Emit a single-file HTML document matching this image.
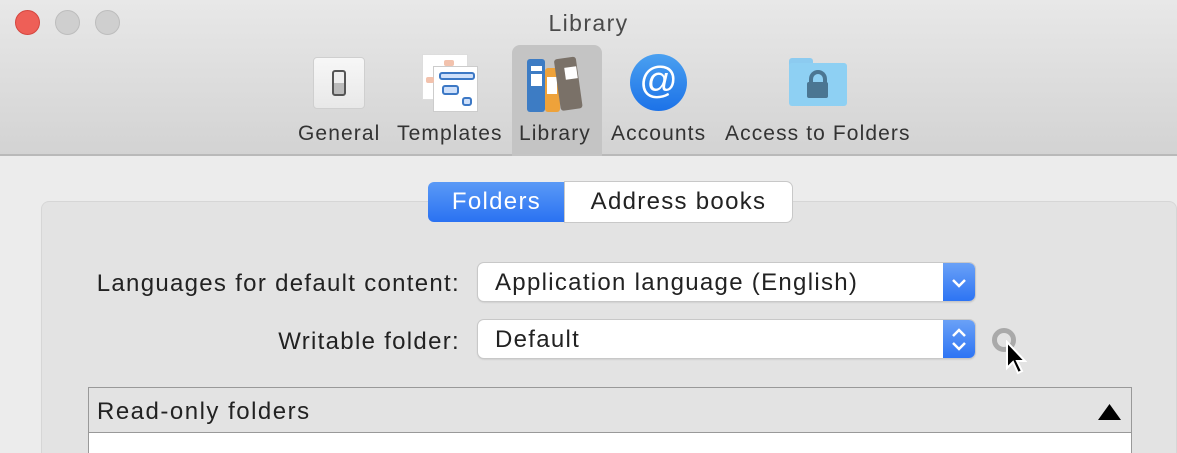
<!DOCTYPE html>
<html><head><style>
*{margin:0;padding:0;box-sizing:border-box}
html,body{width:1177px;height:453px;overflow:hidden}
body{background:#ececec;font-family:"Liberation Sans",sans-serif;position:relative}
.bar{position:absolute;left:0;top:0;width:1177px;height:156px;background:linear-gradient(#e8e8e8,#d3d3d3);border-bottom:2px solid #b9b9b9}
.tl{position:absolute;top:10px;width:25px;height:25px;border-radius:50%}
.title{position:absolute;top:10px;left:0;width:1177px;text-align:center;font-size:23px;letter-spacing:1.4px;color:#4a4a4a}
.lab{position:absolute;top:122px;font-size:21px;letter-spacing:1.1px;color:#333}
.abs{position:absolute}
.group{position:absolute;left:41px;top:201px;width:1136px;height:252px;background:#e3e3e3;border:1px solid #d6d6d6;border-bottom:none;border-radius:8px 8px 0 0}
.seg{position:absolute;top:182px;height:40px;font-size:24px;letter-spacing:1.3px;line-height:40px;text-align:center}
.lbl{position:absolute;font-size:24px;letter-spacing:1.3px;color:#222;text-align:right}
.pop{position:absolute;left:478px;width:497px;height:38px;background:#fff;border-radius:6px;box-shadow:0 0 0 1px #c8c8c8,0 1px 2px rgba(0,0,0,.2);font-size:24px;letter-spacing:1.3px;line-height:40px;padding-left:17px;color:#222}
.pop .btn{position:absolute;right:0;top:0;width:32px;height:38px;border-radius:0 6px 6px 0;background:linear-gradient(#6aa1f6,#2d74f4)}
</style></head><body>
<div class="bar"></div>
<div class="tl" style="left:15px;background:#ee5f57;border:1px solid #d5463f"></div>
<div class="tl" style="left:55px;background:#cfcfcf;border:1px solid #bdbdbd"></div>
<div class="tl" style="left:95px;background:#cfcfcf;border:1px solid #bdbdbd"></div>
<div class="title">Library</div>
<div class="abs" style="left:512px;top:45px;width:90px;height:111px;background:#c4c4c4;border-radius:8px 8px 0 0"></div>
<div class="abs" style="left:313px;top:57px;width:52px;height:52px;background:linear-gradient(#f7f7f7,#e8e8e8);border:1px solid #cfcfcf;border-radius:4px"></div>
<div class="abs" style="left:332px;top:70px;width:14px;height:26px;border:2px solid #555;border-radius:3px;background:linear-gradient(#eee 50%,#bbb 50%)"></div>
<div class="abs" style="left:422px;top:54px;width:46px;height:46px;background:#fff;border:1px solid #ddd"></div>
<div class="abs" style="left:433px;top:66px;width:45px;height:46px;background:#fff;border:1px solid #ccc"></div>
<div class="abs" style="left:439px;top:72px;width:36px;height:8px;background:#cfe0fa;border:2px solid #3c78c5;border-radius:3px"></div>
<div class="abs" style="left:442px;top:85px;width:17px;height:10px;background:#cfe0fa;border:2px solid #3c78c5;border-radius:3px"></div>
<div class="abs" style="left:462px;top:97px;width:10px;height:9px;background:#cfe0fa;border:2px solid #3c78c5;border-radius:3px"></div>
<div class="abs" style="left:444px;top:60px;width:10px;height:6px;background:#f2c2ad;border-radius:2px"></div>
<div class="abs" style="left:426px;top:77px;width:8px;height:6px;background:#f2c2ad;border-radius:2px"></div>
<div class="abs" style="left:527px;top:59px;width:18px;height:53px;background:#3d7cc4;border-radius:3px"></div>
<div class="abs" style="left:531px;top:66px;width:11px;height:5px;background:#fff"></div>
<div class="abs" style="left:531px;top:74px;width:11px;height:12px;background:#fff"></div>
<div class="abs" style="left:545px;top:68px;width:15px;height:44px;background:#eea23a;border-radius:3px"></div>
<div class="abs" style="left:547px;top:77px;width:10px;height:17px;background:#fff"></div>
<div class="abs" style="left:561px;top:59px;width:22px;height:52px;background:#7a7168;border-radius:3px;transform:rotate(-8deg);transform-origin:bottom left"></div>
<div class="abs" style="left:565px;top:67px;width:12px;height:12px;background:#fff;transform:rotate(-8deg)"></div>
<div class="abs" style="left:630px;top:54px;width:57px;height:57px;border-radius:50%;background:linear-gradient(#4aa0f0,#1c72e8);color:#fff;font-size:38px;line-height:54px;text-align:center">@</div>
<div class="abs" style="left:789px;top:58px;width:24px;height:10px;background:#8ccbf0;border-radius:3px 3px 0 0"></div>
<div class="abs" style="left:789px;top:63px;width:58px;height:43px;background:#8ed0f3;border-radius:3px"></div>
<div class="abs" style="left:809px;top:70px;width:18px;height:16px;border:4px solid #4b7692;border-bottom:none;border-radius:9px 9px 0 0"></div>
<div class="abs" style="left:807px;top:82px;width:21px;height:16px;background:#4b7692;border-radius:2px"></div>
<div class="lab" style="left:298px">General</div>
<div class="lab" style="left:397px">Templates</div>
<div class="lab" style="left:519px">Library</div>
<div class="lab" style="left:611px">Accounts</div>
<div class="lab" style="left:725px">Access to Folders</div>

<div class="group"></div>
<div class="seg" style="left:428px;width:137px;background:linear-gradient(#5a9af6,#2a72f2);color:#fff;border-radius:6px 0 0 6px">Folders</div>
<div class="seg" style="left:565px;width:227px;background:#fff;color:#222;border-radius:0 6px 6px 0;box-shadow:0 0 0 1px #c8c8c8">Address books</div>

<div class="lbl" style="left:40px;width:420px;top:270px">Languages for default content:</div>
<div class="pop" style="top:263px">Application language (English)<div class="btn"><svg width="32" height="38"><path d="M10 17l6 6 6-6" stroke="#fff" stroke-width="2.5" fill="none"/></svg></div></div>
<div class="lbl" style="left:40px;width:420px;top:328px">Writable folder:</div>
<div class="pop" style="top:320px">Default<div class="btn"><svg width="32" height="38"><path d="M10 16l6-6 6 6M10 23l6 6 6-6" stroke="#fff" stroke-width="2.5" fill="none"/></svg></div></div>
<div class="abs" style="left:992px;top:328px;width:24px;height:24px;border-radius:50%;border:5px solid #a9a9a9"></div>
<svg class="abs" style="left:1003px;top:340px" width="28" height="40"><path d="M4 2v26l6-6 5 11 4-2-5-10h8z" fill="#000" stroke="#fff" stroke-width="2"/></svg>

<div class="abs" style="left:88px;top:387px;width:1044px;height:66px;border:1px solid #999;border-bottom:none;background:#fff"></div>
<div class="abs" style="left:89px;top:388px;width:1042px;height:45px;background:#e3e3e3;border-bottom:1px solid #999;font-size:24px;letter-spacing:1.5px;line-height:47px;padding-left:8px;color:#222">Read-only folders</div>
<svg class="abs" style="left:1098px;top:402px" width="24" height="20"><path d="M0 18L11.5 2 23 18z" fill="#000"/></svg>
</body></html>
